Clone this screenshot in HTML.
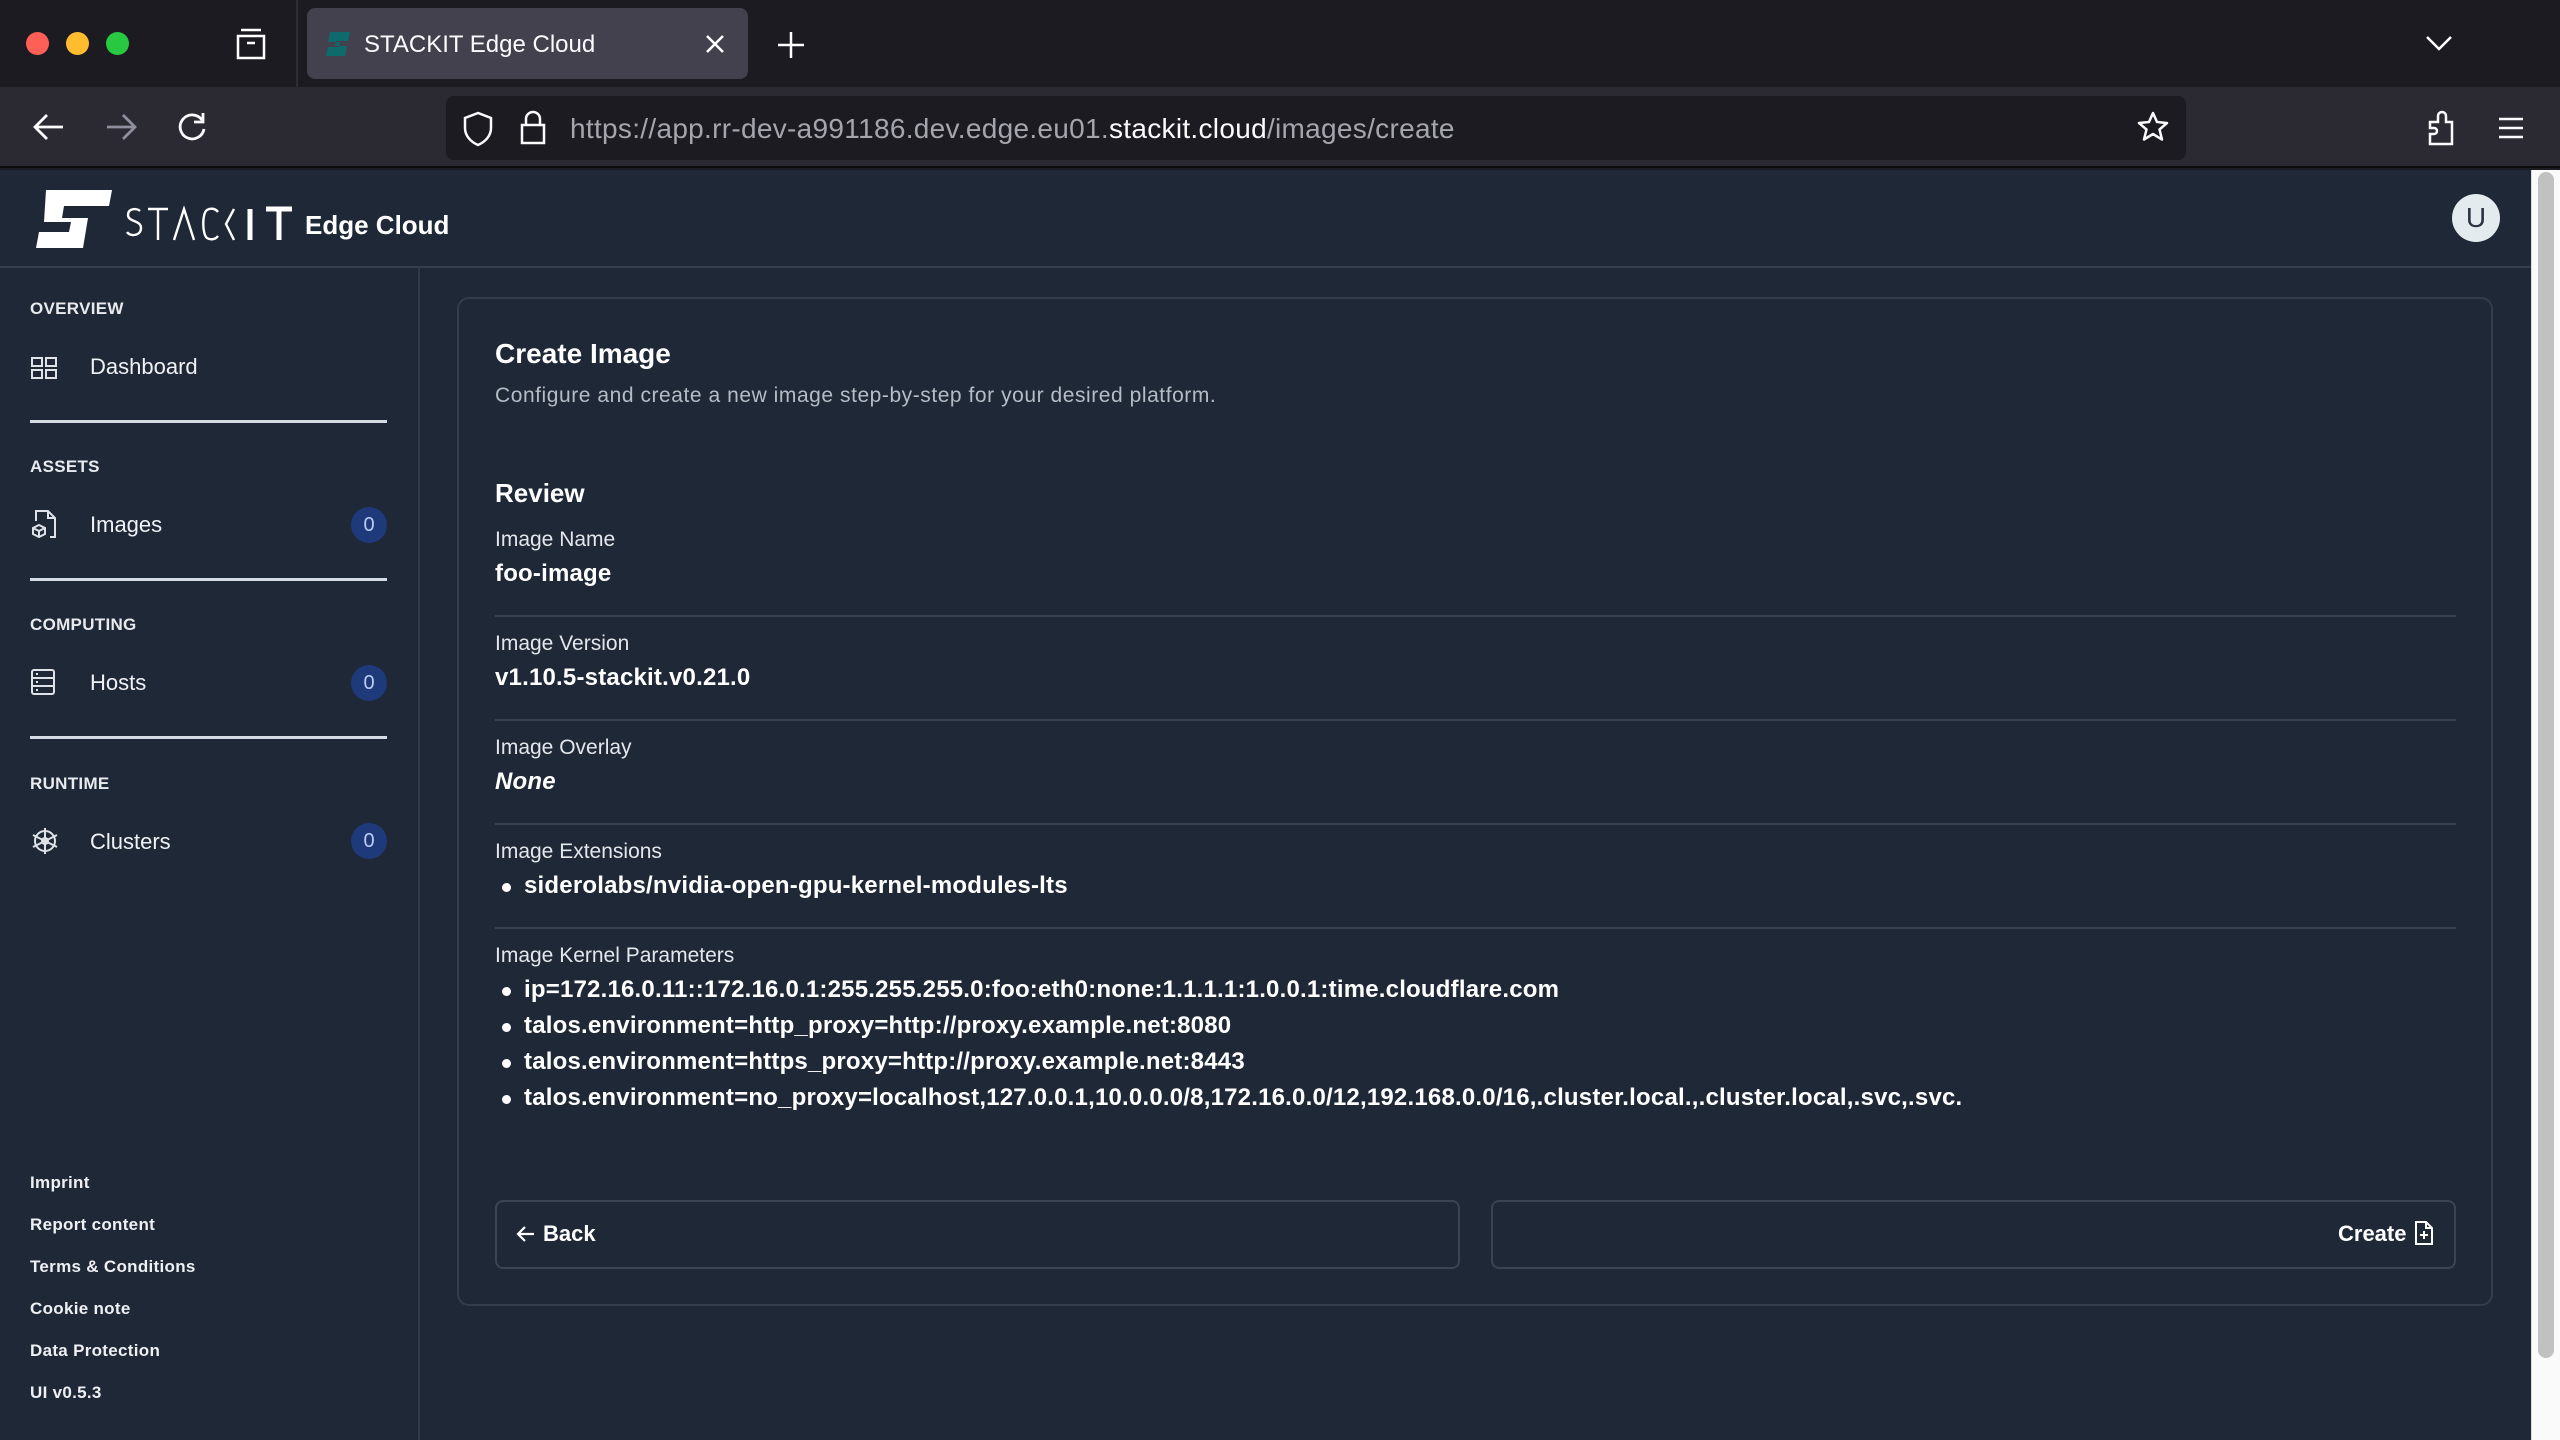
<!DOCTYPE html>
<html><head><meta charset="utf-8"><style>
*{box-sizing:border-box;margin:0;padding:0}
body{width:2560px;height:1440px;overflow:hidden;background:#1c1b22;font-family:"Liberation Sans",sans-serif;color:#fff;position:relative}
.abs{position:absolute}
.dot{position:absolute;top:32px;width:23px;height:23px;border-radius:50%}
.lab{position:absolute;left:30px;font-size:17px;font-weight:bold;color:#e8eaee;letter-spacing:0.3px}
.nav{position:absolute;left:90px;font-size:22px;color:#f0f2f5}
.ico{position:absolute;left:30px}
.badge{position:absolute;left:351px;width:36px;height:36px;border-radius:50%;background:#1f3a7a;color:#b9cdf5;font-size:20px;text-align:center;line-height:36px}
.hr{position:absolute;left:30px;width:357px;height:3px;background:#d6dbe3}
.foot{position:absolute;left:30px;font-size:17px;font-weight:bold;color:#eef0f3;letter-spacing:0.3px}
.k{position:absolute;left:495px;font-size:21px;color:#e4e7ec}
.v{position:absolute;left:495px;font-size:24px;font-weight:bold;color:#fff;letter-spacing:0.2px}
.sep{position:absolute;left:495px;width:1961px;height:2px;background:#39434f}
.li{position:absolute;left:524px;font-size:24px;font-weight:bold;color:#fff;letter-spacing:0.2px}
.li:before{content:"";position:absolute;left:-22px;top:11px;width:9px;height:9px;border-radius:50%;background:#fff}
</style></head><body>
<!-- tab bar -->
<div class="dot" style="left:26px;background:#fe5f57"></div>
<div class="dot" style="left:66px;background:#febc2e"></div>
<div class="dot" style="left:106px;background:#28c840"></div>
<svg class="abs" style="left:234px;top:28px" width="34" height="34" viewBox="0 0 34 34" fill="none" stroke="#fff" stroke-width="2.5"><path d="M7 2h20M4 8h26v22H4z"/><path d="M13 15h8"/></svg>
<div class="abs" style="left:296px;top:0;width:2px;height:87px;background:#2e2d35"></div>
<div class="abs" style="left:307px;top:8px;width:441px;height:71px;border-radius:8px;background:#42414d"></div>
<svg class="abs" style="left:324px;top:30px" width="28" height="28" viewBox="0 0 28 28"><path d="M6 2h20l-2 9H12l-1 5h12l-2 10H2l2-9h11l1-5H4z" fill="#0f6b6b"/></svg>
<div class="abs" style="left:364px;top:31px;font-size:24px;color:#fbfbfe">STACKIT Edge Cloud</div>
<svg class="abs" style="left:704px;top:33px" width="22" height="22" stroke="#fff" stroke-width="2.5"><path d="M3 3l16 16M19 3L3 19"/></svg>
<svg class="abs" style="left:776px;top:30px" width="30" height="30" stroke="#fff" stroke-width="2.5"><path d="M15 2v26M2 15h26"/></svg>
<svg class="abs" style="left:2424px;top:33px" width="30" height="20" fill="none" stroke="#fff" stroke-width="2.5"><path d="M3 4l12 12L27 4"/></svg>
<!-- toolbar -->
<div class="abs" style="left:0;top:87px;width:2560px;height:81px;background:#2b2a33;border-bottom:2px solid #0c0c0f"></div>
<svg class="abs" style="left:32px;top:112px" width="34" height="30" fill="none" stroke="#fbfbfe" stroke-width="2.8"><path d="M3 15h28M15 3L3 15l12 12"/></svg>
<svg class="abs" style="left:104px;top:112px" width="34" height="30" fill="none" stroke="#8f8f9d" stroke-width="2.8"><path d="M3 15h28M19 3l12 12-12 12"/></svg>
<svg class="abs" style="left:176px;top:110px" width="34" height="34" fill="none" stroke="#fbfbfe" stroke-width="2.8"><path d="M26 10A12 12 0 1 0 28 19"/><path d="M27 3v9h-9"/></svg>
<div class="abs" style="left:446px;top:96px;width:1740px;height:64px;border-radius:8px;background:#1c1b22"></div>
<svg class="abs" style="left:462px;top:111px" width="32" height="36" fill="none" stroke="#fbfbfe" stroke-width="2.5"><path d="M16 2L3 7v10c0 8 6 14 13 17 7-3 13-9 13-17V7z"/></svg>
<svg class="abs" style="left:518px;top:110px" width="30" height="36" fill="none" stroke="#fbfbfe" stroke-width="2.5"><path d="M8 15V9a7 7 0 0 1 14 0v6M4 15h22v18H4z"/></svg>
<div class="abs" style="left:570px;top:113px;font-size:28px;color:#a5a5ad;white-space:nowrap;letter-spacing:0.3px">https://app.rr-dev-a991186.dev.edge.eu01.<span style="color:#fbfbfe">stackit.cloud</span>/images/create</div>
<svg class="abs" style="left:2136px;top:110px" width="34" height="34" fill="none" stroke="#fbfbfe" stroke-width="2.5" stroke-linejoin="round"><path d="M17 3l4 9 10 1-7.5 6.5 2.5 10-9-5.5-9 5.5 2.5-10L3 13l10-1z"/></svg>
<svg class="abs" style="left:2426px;top:110px" width="30" height="36" fill="none" stroke="#fbfbfe" stroke-width="2.5"><path d="M4 34V24h4a3 3 0 0 0 0-6H4V12h8V6a4 4 0 0 1 8 0v6h6v22z"/></svg>
<svg class="abs" style="left:2498px;top:116px" width="26" height="24" stroke="#fbfbfe" stroke-width="2.5"><path d="M1 3h24M1 12h24M1 21h24"/></svg>
<!-- app -->
<div class="abs" style="left:0;top:170px;width:2531px;height:1270px;background:#1e2837"></div>
<div class="abs" style="left:0;top:266px;width:2531px;height:2px;background:#343f4e"></div>
<svg class="abs" style="left:36px;top:190px" width="76" height="58" viewBox="0 0 76 58"><path d="M10 0h66l-3 16H28l-2 12h26l-5 30H0l3-16h30l2-10H8z" fill="#fff"/></svg>
<svg class="abs" style="left:126px;top:206px" width="170" height="36" viewBox="0 0 170 36" fill="none" stroke="#fff" stroke-width="2.4">
<path d="M14 5C11 2 2 2 2 9s13 5 13 13-11 9-14 4"/>
<path d="M22 3h20M32 3v31"/>
<path d="M48 34L58 3l10 31"/>
<path d="M92 6c-3-4-8-4-11-2-5 3-5 24 0 28 3 2 8 2 11-2"/>
<path d="M108 3l-8 15 8 16"/>
<path d="M124 3v31" stroke-width="5"/>
<path d="M140 3h26M153 3v31" stroke-width="5"/>
</svg>
<div class="abs" style="left:305px;top:210px;font-size:26px;font-weight:bold">Edge Cloud</div>
<div class="abs" style="left:2452px;top:194px;width:48px;height:48px;border-radius:50%;background:#e3ebee;color:#2a3340;font-size:28px;text-align:center;line-height:48px">U</div>
<div class="abs" style="left:2531px;top:170px;width:29px;height:1270px;background:#fafafa;border-left:1px solid #ddd"></div>
<div class="abs" style="left:2538px;top:172px;width:16px;height:1186px;border-radius:8px;background:#c1c1c1"></div>
<!-- sidebar -->
<div class="abs" style="left:418px;top:268px;width:2px;height:1172px;background:#2f3a49"></div>
<div class="lab" style="top:299px">OVERVIEW</div>
<svg class="ico" style="top:356px" width="28" height="24" fill="none" stroke="#dfe3e8" stroke-width="2"><rect x="2" y="2" width="10" height="8"/><rect x="16" y="2" width="10" height="8"/><rect x="2" y="14" width="10" height="8"/><rect x="16" y="14" width="10" height="8"/></svg>
<div class="nav" style="top:354px">Dashboard</div>
<div class="hr" style="top:420px"></div>
<div class="lab" style="top:457px">ASSETS</div>
<svg class="ico" style="top:509px" width="28" height="30" fill="none" stroke="#dfe3e8" stroke-width="2"><path d="M6 12V2h12l7 7v19h-5M18 2v7h7"/><path d="M9 16l6 3v6l-6 3-6-3v-6zM3 19l6 3 6-3M9 22v6"/></svg>
<div class="nav" style="top:512px">Images</div>
<div class="badge" style="top:507px">0</div>
<div class="hr" style="top:578px"></div>
<div class="lab" style="top:615px">COMPUTING</div>
<svg class="ico" style="top:668px" width="26" height="28" fill="none" stroke="#dfe3e8" stroke-width="2"><rect x="2" y="2" width="22" height="24" rx="2"/><path d="M2 10h22M2 18h22M6 6h2M6 14h2M6 22h2"/></svg>
<div class="nav" style="top:670px">Hosts</div>
<div class="badge" style="top:665px">0</div>
<div class="hr" style="top:736px"></div>
<div class="lab" style="top:774px">RUNTIME</div>
<svg class="ico" style="top:826px" width="30" height="30" fill="none" stroke="#dfe3e8" stroke-width="2"><circle cx="15" cy="15" r="10"/><circle cx="15" cy="15" r="3"/><path d="M15 2v26M3 9l24 12M3 21l24-12"/></svg>
<div class="nav" style="top:829px">Clusters</div>
<div class="badge" style="top:823px">0</div>
<div class="foot" style="top:1173px">Imprint</div>
<div class="foot" style="top:1215px">Report content</div>
<div class="foot" style="top:1257px">Terms &amp; Conditions</div>
<div class="foot" style="top:1299px">Cookie note</div>
<div class="foot" style="top:1341px">Data Protection</div>
<div class="foot" style="top:1383px">UI v0.5.3</div>
<!-- card -->
<div class="abs" style="left:457px;top:297px;width:2036px;height:1009px;border:2px solid #333e4c;border-radius:12px"></div>
<div class="abs" style="left:495px;top:338px;font-size:28px;font-weight:bold">Create Image</div>
<div class="abs" style="left:495px;top:384px;font-size:21px;color:#b6bcc6;letter-spacing:0.55px">Configure and create a new image step-by-step for your desired platform.</div>
<div class="abs" style="left:495px;top:478px;font-size:26px;font-weight:bold">Review</div>
<div class="k" style="top:528px">Image Name</div>
<div class="v" style="top:560px">foo-image</div>
<div class="sep" style="top:615px"></div>
<div class="k" style="top:632px">Image Version</div>
<div class="v" style="top:664px">v1.10.5-stackit.v0.21.0</div>
<div class="sep" style="top:719px"></div>
<div class="k" style="top:736px">Image Overlay</div>
<div class="v" style="top:768px;font-style:italic">None</div>
<div class="sep" style="top:823px"></div>
<div class="k" style="top:840px">Image Extensions</div>
<div class="li" style="top:872px">siderolabs/nvidia-open-gpu-kernel-modules-lts</div>
<div class="sep" style="top:927px"></div>
<div class="k" style="top:944px">Image Kernel Parameters</div>
<div class="li" style="top:976px">ip=172.16.0.11::172.16.0.1:255.255.255.0:foo:eth0:none:1.1.1.1:1.0.0.1:time.cloudflare.com</div>
<div class="li" style="top:1012px">talos.environment=http_proxy=http://proxy.example.net:8080</div>
<div class="li" style="top:1048px">talos.environment=https_proxy=http://proxy.example.net:8443</div>
<div class="li" style="top:1084px">talos.environment=no_proxy=localhost,127.0.0.1,10.0.0.0/8,172.16.0.0/12,192.168.0.0/16,.cluster.local.,.cluster.local,.svc,.svc.</div>
<div class="abs" style="left:495px;top:1200px;width:965px;height:69px;border:2px solid #3a4553;border-radius:8px"></div>
<div class="abs" style="left:1491px;top:1200px;width:965px;height:69px;border:2px solid #3a4553;border-radius:8px"></div>
<svg class="abs" style="left:516px;top:1224px" width="20" height="20" fill="none" stroke="#fff" stroke-width="2.2"><path d="M2 10h16M9 3l-7 7 7 7"/></svg>
<div class="abs" style="left:543px;top:1221px;font-size:22px;font-weight:bold">Back</div>
<div class="abs" style="left:2338px;top:1221px;font-size:22px;font-weight:bold">Create</div>
<svg class="abs" style="left:2414px;top:1220px" width="20" height="26" fill="none" stroke="#fff" stroke-width="2"><path d="M2 2h10l6 6v16H2zM12 2v6h6M10 11v8M6 15h8"/></svg>
</body></html>
